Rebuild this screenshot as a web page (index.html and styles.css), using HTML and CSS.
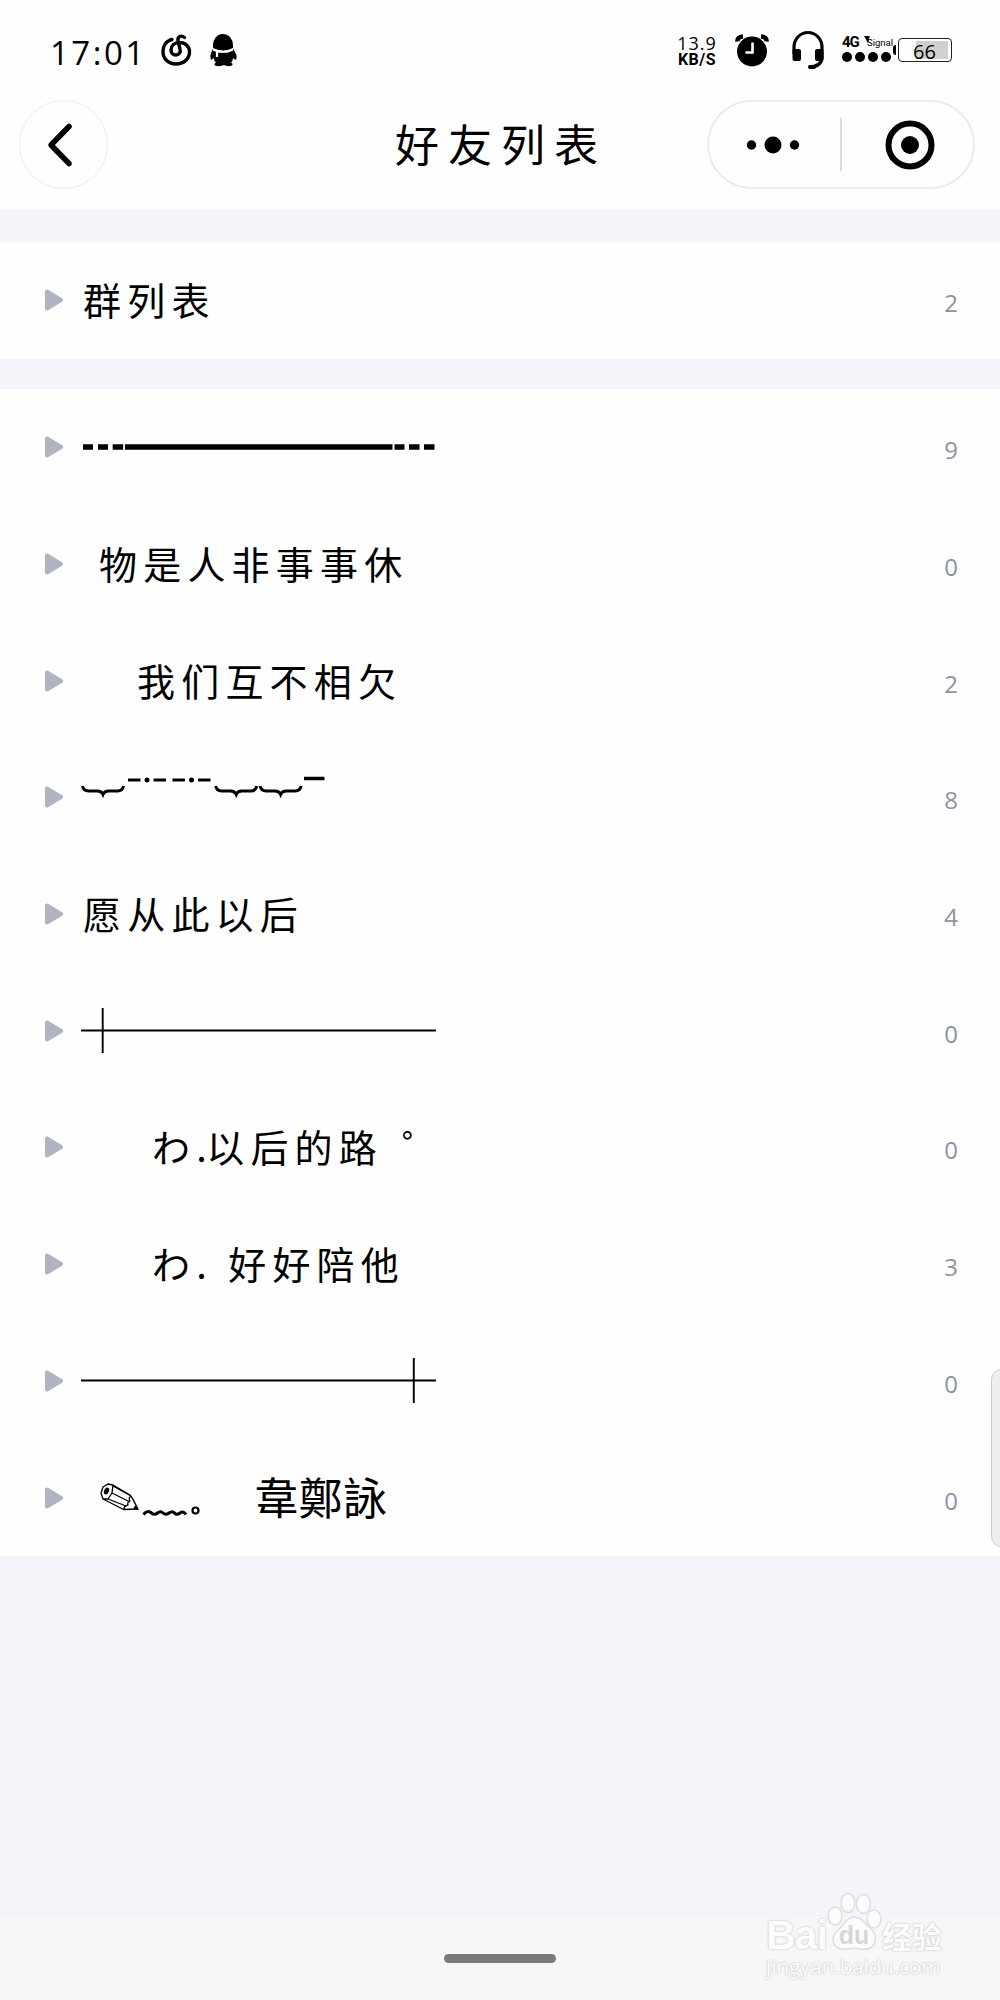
FILE: index.html
```html
<!DOCTYPE html>
<html lang="zh-CN">
<head>
    <title>好友列表</title>
    <meta charset="utf-8">
    <meta name="viewport" content="width=device-width, initial-scale=1">
    <link rel="stylesheet" href="styles.css">
</head>
<body>
    <div class="header">
        <div class="status-bar">
            <span class="time">17:01</span>
            <svg class="icon-music" width="32" height="34" viewBox="0 0 32 34" fill="none" stroke="#000" stroke-width="3.4" stroke-linecap="round">
                <path d="M12 6.500C6 8 3 13 3 18.500C3 26 8.500 31 16 31S29.500 26 29.500 19C29.500 13 25 9.500 19.500 9.500C14 9.500 11 13 11 17C11 20 13 22 15.800 22C19 22 21 19.500 20 16L18 8C17.300 4 20.500 1.500 24.500 4.500"/>
            </svg>
            <svg class="icon-qq" width="30" height="34" viewBox="0 0 30 34">
                <path d="M5 15V12a10 11 0 0 1 20 0v3q-10 5-20 0z"/>
                <path d="M4.500 16q10 6 21 0l3 6q.5 4-1 5l-2.500-2q0 3-2 4.500 2.500 1.500 1 3-4.500 1.500-8-.5-4 2-9 .5-1.500-1.500 1-3-2-1.500-2.500-4.500l-2 2q-1.500-1-1-5z"/>
                <path d="M5 16.500q10 5 20 0M9 18v6" fill="none" stroke="#fff" stroke-width="2.200"/>
            </svg>
            <div class="speed">
                <span class="speed-value">13.9</span>
                <span class="speed-unit">KB/S</span>
            </div>
            <svg class="icon-alarm" width="36" height="34" viewBox="0 0 36 34">
                <circle cx="18" cy="17.500" r="15"/>
                <path d="M3.500 7.500Q3 3 9 2.500M32.500 7.500Q33 3 27 2.500" fill="none" stroke="#000" stroke-width="4.500"/>
                <path d="M18.500 8.500v10h-7" fill="none" stroke="#fff" stroke-width="2.600"/>
            </svg>
            <svg class="icon-headset" width="34" height="40" viewBox="0 0 34 40">
                <path d="M3 24V17a14 14.500 0 0 1 28 0v11q-1 9-13 9" fill="none" stroke="#000" stroke-width="3.200"/>
                <rect x="1.500" y="19" width="8.500" height="12" rx="2"/>
                <rect x="24" y="19" width="8.500" height="12" rx="2"/>
                <rect x="17" y="35" width="8" height="4" rx="2"/>
            </svg>
            <div class="network">
                <div class="network-text"><b>4G</b><svg width="6" height="7" viewBox="0 0 6 7"><path d="M0 0h6L4 7z"/></svg>Signal</div>
                <div class="network-dots"><i></i><i></i><i></i><i></i></div>
            </div>
            <div class="battery"><span>66</span></div>
        </div>
        <div class="nav">
            <div class="back">
                <svg width="26" height="46" viewBox="0 0 26 46" fill="none" stroke="#000" stroke-width="5.500" stroke-linecap="round" stroke-linejoin="round"><path d="M22 4.500L4 23l18 18.500"/></svg>
            </div>
            <h1>好友列表</h1>
            <div class="capsule">
                <svg width="54" height="20" viewBox="0 0 54 20"><circle cx="5.500" cy="10" r="4.700"/><circle cx="27" cy="10" r="8.500"/><circle cx="48.500" cy="10" r="4.700"/></svg>
                <div class="divider"></div>
                <svg width="50" height="50" viewBox="0 0 50 50"><circle cx="25" cy="25" r="21.500" fill="none" stroke="#000" stroke-width="6"/><circle cx="25" cy="25" r="9"/></svg>
            </div>
        </div>
    </div>

    <div class="list">
        <div class="row"><svg class="arrow" viewBox="0 0 18 22"><path d="M2 2.500v17L16 11z"/></svg><div class="name">群列表</div><div class="count">2</div></div>
    </div>

    <div class="list">
        <div class="row"><svg class="arrow" viewBox="0 0 18 22"><path d="M2 2.500v17L16 11z"/></svg>
            <div class="name symbols">
                <svg width="356" height="46" viewBox="0 0 356 46" stroke="#000" stroke-width="5.500"><path d="M2 23h10M17 23h10M31.700 23h10.500M44 23h267.500M313.500 23h10M328 23h10.500M343 23h10.500"/></svg>
            </div>
            <div class="count">9</div></div>
        <div class="row"><svg class="arrow" viewBox="0 0 18 22"><path d="M2 2.500v17L16 11z"/></svg><div class="name indent-1">物是人非事事休</div><div class="count">0</div></div>
        <div class="row"><svg class="arrow" viewBox="0 0 18 22"><path d="M2 2.500v17L16 11z"/></svg><div class="name indent-2">我们互不相欠</div><div class="count">2</div></div>
        <div class="row"><svg class="arrow" viewBox="0 0 18 22"><path d="M2 2.500v17L16 11z"/></svg>
            <div class="name symbols">
                <svg width="356" height="46" viewBox="0 0 356 46" fill="none" stroke="#000" stroke-width="3">
                    <path id="brace" d="M1.500 12q1 5 6 5h9q4 0 5.500 3.500q1.500-3.500 5.500-3.500h9q5 0 6-5"/>
                    <use href="#brace" x="133.200"/>
                    <use href="#brace" x="177.600"/>
                    <path d="M47 6h12.500M72.500 6h12.500M91.500 6h12.500M117 6h12.500"/>
                    <path d="M66 6h.01M110.500 6h.01" stroke-width="5" stroke-linecap="round"/>
                    <path d="M223 4.500h20.500" stroke-width="3.500"/>
                </svg>
            </div>
            <div class="count">8</div></div>
        <div class="row"><svg class="arrow" viewBox="0 0 18 22"><path d="M2 2.500v17L16 11z"/></svg><div class="name">愿从此以后</div><div class="count">4</div></div>
        <div class="row"><svg class="arrow" viewBox="0 0 18 22"><path d="M2 2.500v17L16 11z"/></svg>
            <div class="name symbols">
                <svg width="356" height="46" viewBox="0 0 356 46" stroke="#000" stroke-width="1.900"><path d="M0 22.500h355M21.700 0v45"/></svg>
            </div>
            <div class="count">0</div></div>
        <div class="row"><svg class="arrow" viewBox="0 0 18 22"><path d="M2 2.500v17L16 11z"/></svg><div class="name indent-3">わ<span class="dot">.</span>以后的路<span class="ring">゜</span></div><div class="count">0</div></div>
        <div class="row"><svg class="arrow" viewBox="0 0 18 22"><path d="M2 2.500v17L16 11z"/></svg><div class="name indent-3">わ<span class="dot wide">.</span>好好陪他</div><div class="count">3</div></div>
        <div class="row"><svg class="arrow" viewBox="0 0 18 22"><path d="M2 2.500v17L16 11z"/></svg>
            <div class="name symbols">
                <svg width="356" height="46" viewBox="0 0 356 46" stroke="#000" stroke-width="1.900"><path d="M0 22.500h355M332.800 0v45"/></svg>
            </div>
            <div class="count">0</div></div>
        <div class="row"><svg class="arrow" viewBox="0 0 18 22"><path d="M2 2.500v17L16 11z"/></svg>
            <div class="name symbols indent-1">
                <!-- pencil, wavy line, small circle -->
                <svg width="106" height="46" viewBox="0 0 106 46" fill="none" stroke="#000" stroke-width="1.300" stroke-linejoin="round">
                    <path d="M2 18l2-6 5-3 5 1 17 10q4 5 7.500 14l-14 .5L4 24zM14 10l-1 8-4 6H4M13 18l18 9M9 24l18 7M14 11l18 10M32 21q-3 2-1 5-3 1-2 4-4 1-4 4"/>
                    <ellipse cx="7.500" cy="16" rx="1.800" ry="3" fill="#000" transform="rotate(25 7.500 16)"/>
                    <path d="M35 33.500l4 .8-2-3.600z" fill="#000"/>
                    <path d="M44.500 39.500q4-5 8-1.500 3 2.500 6 0t5.500 0 6 0 5.500 0 5.500 0 6 1.500" stroke-width="3"/>
                    <circle cx="96.500" cy="35.500" r="3" stroke-width="2.200"/>
                </svg>
                <span class="author">韋鄭詠</span>
            </div>
            <div class="count">0</div></div>
    </div>

    <div class="scroll-handle"></div>

    <div class="bottom-bar"><div class="home-pill"></div></div>

    <div class="watermark">
        <div class="watermark-logo">
            <span class="bai">Bai</span>
            <svg width="56" height="60" viewBox="0 0 56 60" fill="#fcfcfe" stroke="#dddde1" stroke-width="1.500">
                <ellipse cx="8" cy="24" rx="7" ry="9"/>
                <ellipse cx="21" cy="11" rx="7" ry="9.500"/>
                <ellipse cx="36.500" cy="12" rx="7" ry="9.500"/>
                <ellipse cx="47" cy="27" rx="7" ry="9"/>
                <path d="M27 25c7 0 11 6 15 10 5 4 8 9 6 15-2 7-9 8-14 7-5-1-9-1-14 0-6 1-14-1-14-10 0-6 5-8 9-13 4-6 7-9 12-9z"/>
                <text x="27" y="52" text-anchor="middle">du</text>
            </svg>
            <span class="jingyan">经验</span>
        </div>
        <div class="watermark-url">jingyan.baidu.com</div>
    </div>
</body>
</html>
```
FILE: styles.css
```css
* { box-sizing: border-box; }
body {
    margin: 0;
    min-height: 2000px;
    display: flex;
    flex-direction: column;
    position: relative;
    overflow-x: hidden;
    background: #f4f5fa;
    color: #000;
    font-family: "Open Sans", "Noto Sans CJK SC", sans-serif;
}
.header {
    height: 211px;
    background: #fefefe;
    border-bottom: 1px solid #f3f3f5;
}

/* status bar */
.status-bar {
    height: 100px;
    padding: 3px 47px 0 50px;
    display: flex;
    align-items: center;
}
.time {
    width: 110px;
    font-size: 33px;
    letter-spacing: 2.5px;
    line-height: 40px;
    padding-top: 2px;
}
.icon-music { margin-right: 17px; margin-top: -4px; }
.icon-qq { margin-top: -4px; margin-left: -1px; }
.speed {
    margin-left: 438px;
    width: 42px;
    display: flex;
    flex-direction: column;
    align-items: center;
}
.speed-value {
    font-size: 18px;
    line-height: 17px;
    letter-spacing: 1px;
}
.speed-unit {
    font: bold 16px/16px Roboto, sans-serif;
    letter-spacing: 0.5px;
}
.icon-alarm { margin: -2px 20px 0 16px; }
.icon-headset { margin: -3px 17px 0 1px; }
.network { width: 51px; margin-top: -5px; }
.network-text {
    display: flex;
    font: 9.5px/13px Roboto, sans-serif;
    white-space: nowrap;
}
.network-text b {
    width: 23px;
    font-size: 15px;
    letter-spacing: -1px;
}
.network-text svg { margin-right: -3px; }
.network-dots {
    display: flex;
    gap: 3px;
    margin-top: 3px;
}
.network-dots i {
    width: 10px;
    height: 10px;
    border-radius: 50%;
    background: #000;
}
.battery {
    margin-left: 5px;
    margin-top: -3px;
    width: 54px;
    height: 24px;
    position: relative;
    border: 1.5px solid #222;
    border-radius: 4px;
    background: linear-gradient(#d0d0d0, #d0d0d0) 17px 2px / 32px 18px no-repeat;
    text-align: center;
    font-size: 20px;
    line-height: 26px;
}
.battery::before {
    content: "";
    position: absolute;
    left: -6px;
    top: 6px;
    width: 3px;
    height: 10px;
    border-radius: 3px 0 0 3px;
    background: #000;
}
.battery span { margin-right: 1px; }

/* title bar */
.nav {
    height: 89px;
    padding: 0 25px 0 19px;
    display: flex;
    align-items: center;
    justify-content: space-between;
}
.back {
    width: 89px;
    height: 89px;
    padding-right: 7px;
    border: 1.5px solid #ececec;
    border-radius: 50%;
    display: flex;
    align-items: center;
    justify-content: center;
}
h1 {
    margin: 0 0 0 187px;
    font-size: 44px;
    font-weight: 400;
    line-height: 60px;
    letter-spacing: 9px;
}
.capsule {
    width: 268px;
    height: 89px;
    padding: 0 38px 0 37px;
    border: 2px solid #ebebeb;
    border-radius: 45px;
    display: flex;
    align-items: center;
    justify-content: space-between;
}
.capsule .divider {
    width: 2px;
    height: 53px;
    margin-right: 4px;
    background: #dcdcdc;
}

/* groups */
.list {
    margin-top: 31px;
    background: #fefefe;
}
.list + .list { margin-top: 30.3px; }
.row {
    height: 116.7px;
    padding: 0 42px 0 45px;
    display: flex;
    align-items: center;
}
.arrow {
    width: 18px;
    height: 22px;
    margin-right: 18px;
    flex: none;
    fill: #b0b4c0;
    stroke: #b0b4c0;
    stroke-width: 4;
    stroke-linejoin: round;
}
.name {
    flex: 1;
    padding-left: 2px;
    margin-top: -2px;
    font-family: "Noto Sans CJK SC", sans-serif;
    font-size: 38px;
    line-height: 60px;
    letter-spacing: 6.2px;
    white-space: nowrap;
}
.symbols {
    display: flex;
    align-items: center;
    padding-left: 0;
    margin-top: 0;
    font-size: 44.4px;
    letter-spacing: 0;
}
.indent-1 { padding-left: 18px; }
.indent-2 { padding-left: 56px; }
.indent-3 { padding-left: 71px; }
.dot {
    display: inline-block;
    width: 10px;
    letter-spacing: 0;
}
.wide { width: 32px; }
.ring { margin-left: 19px; }
.author {
    margin-left: 49px;
    margin-top: -4px;
}
.count {
    padding-top: 5px;
    color: #8e92a6;
    font-size: 24px;
}

.scroll-handle {
    position: absolute;
    right: -12px;
    top: 1369px;
    width: 21px;
    height: 178px;
    border: 1.5px solid #ccc;
    border-radius: 12px;
    background: #eee;
}
.bottom-bar {
    height: 83px;
    margin-top: auto;
    padding-top: 37px;
    background: #f7f7f7;
}
.home-pill {
    width: 112px;
    height: 9px;
    margin: 0 auto;
    border-radius: 5px;
    background: #7a7a7a;
}

/* watermark */
.watermark {
    position: absolute;
    left: 766px;
    top: 1892px;
    width: 182px;
    color: #fcfcfe;
    text-shadow: 0 0 2px #ccc, 0 0 2px #ccc;
}
.watermark-logo {
    height: 60px;
    display: flex;
    align-items: flex-end;
}
.bai {
    width: 62px;
    font: bold 41px/34px "Liberation Sans", sans-serif;
    letter-spacing: -1px;
}
.watermark svg { flex: none; margin-left: -1px; }
.watermark text {
    fill: #d6d6da;
    stroke: none;
    font: bold 25px "Liberation Sans", sans-serif;
    text-shadow: none;
}
.jingyan {
    margin-left: -1px;
    font: bold 30px/34px "Noto Sans CJK SC", sans-serif;
}
.watermark-url {
    font: 20.5px/26px "Open Sans", sans-serif;
    margin-top: 1px;
}
```
